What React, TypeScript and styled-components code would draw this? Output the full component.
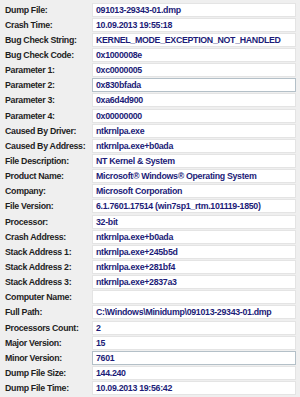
import styled, { createGlobalStyle } from 'styled-components'

const GlobalStyle = createGlobalStyle`
  html, body {
    margin: 0;
    padding: 0;
    background: #efefef;
  }
`

type Field = { label: string; value: string; active?: boolean }

const fields: Field[] = [
  { label: 'Dump File:', value: '091013-29343-01.dmp' },
  { label: 'Crash Time:', value: '10.09.2013 19:55:18' },
  { label: 'Bug Check String:', value: 'KERNEL_MODE_EXCEPTION_NOT_HANDLED' },
  { label: 'Bug Check Code:', value: '0x1000008e' },
  { label: 'Parameter 1:', value: '0xc0000005' },
  { label: 'Parameter 2:', value: '0x830bfada', active: true },
  { label: 'Parameter 3:', value: '0xa6d4d900' },
  { label: 'Parameter 4:', value: '0x00000000' },
  { label: 'Caused By Driver:', value: 'ntkrnlpa.exe' },
  { label: 'Caused By Address:', value: 'ntkrnlpa.exe+b0ada' },
  { label: 'File Description:', value: 'NT Kernel & System' },
  { label: 'Product Name:', value: 'Microsoft® Windows® Operating System' },
  { label: 'Company:', value: 'Microsoft Corporation' },
  { label: 'File Version:', value: '6.1.7601.17514 (win7sp1_rtm.101119-1850)' },
  { label: 'Processor:', value: '32-bit' },
  { label: 'Crash Address:', value: 'ntkrnlpa.exe+b0ada' },
  { label: 'Stack Address 1:', value: 'ntkrnlpa.exe+245b5d' },
  { label: 'Stack Address 2:', value: 'ntkrnlpa.exe+281bf4' },
  { label: 'Stack Address 3:', value: 'ntkrnlpa.exe+2837a3' },
  { label: 'Computer Name:', value: '' },
  { label: 'Full Path:', value: 'C:\\Windows\\Minidump\\091013-29343-01.dmp' },
  { label: 'Processors Count:', value: '2' },
  { label: 'Major Version:', value: '15' },
  { label: 'Minor Version:', value: '7601', active: true },
  { label: 'Dump File Size:', value: '144.240' },
  { label: 'Dump File Time:', value: '10.09.2013 19:56:42' },
]

function App() {
  return (
    <>
      <GlobalStyle />
      <Panel>
        {fields.map((f) => (
          <Row key={f.label}>
            <Label>{f.label}</Label>
            <Value $active={f.active}>{f.value}</Value>
          </Row>
        ))}
      </Panel>
    </>
  )
}

const Panel = styled.div`
  width: 300px;
  height: 397px;
  box-sizing: border-box;
  padding: 2px 4px 0 5px;
  display: grid;
  grid-auto-rows: 15.15px;
  font-family: 'Liberation Sans', Arial, sans-serif;
  font-weight: bold;
  font-size: 8.8px;
  letter-spacing: -0.3px;
  overflow: hidden;
`

const Row = styled.div`
  display: grid;
  grid-template-columns: 87px 1fr;
  align-items: center;
`

const Label = styled.div`
  color: #1e1e1e;
  white-space: nowrap;
`

const Value = styled.div<{ $active?: boolean }>`
  height: 14px;
  box-sizing: border-box;
  padding: 0 3px;
  line-height: 12px;
  background: #ffffff;
  border: 1px solid ${({ $active }) => ($active ? '#b4c0c8' : '#e4e4e4')};
  color: #1c1c78;
  white-space: nowrap;
  overflow: hidden;
`

export default App
